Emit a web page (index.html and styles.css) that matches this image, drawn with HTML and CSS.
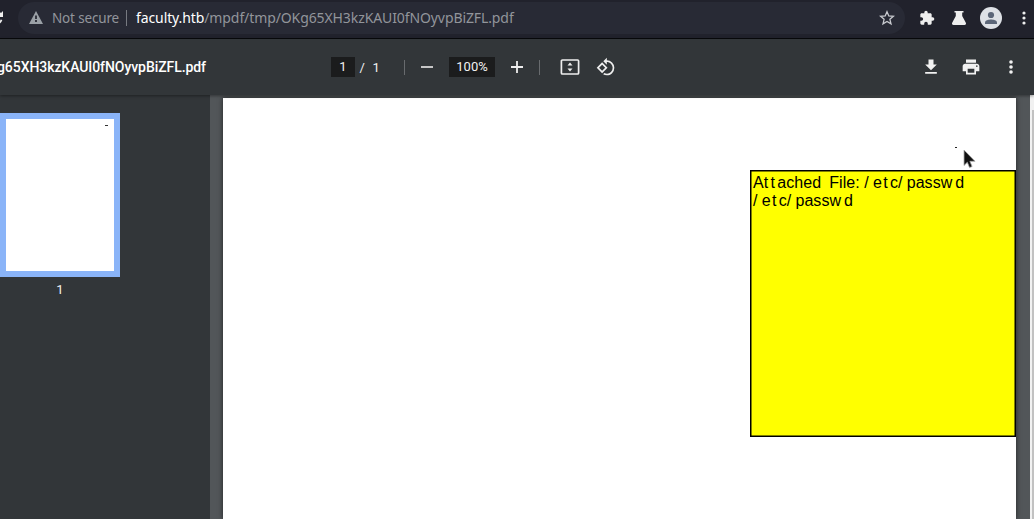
FILE: index.html
```
<!DOCTYPE html>
<html lang="en">
<head>
<meta charset="utf-8">
<title>PDF viewer</title>
<link rel="stylesheet" href="styles.css">
</head>
<body>
<div class="window">
  <header class="browser-bar">
    <svg class="reload" width="18" height="36" viewBox="0 0 18 36"><path d="M-5 12.2A6.3 6.3 0 0 1 1.2 14.6M-5 24A6.3 6.3 0 0 0 1.5 19.7" fill="none" stroke="#eee" stroke-width="1.8"/><path d="M3 11v6h-6z" fill="#eee"/></svg>
    <div class="address">
      <svg class="warning" width="14" height="13" viewBox="0 0 14 13"><path d="M7 0l7 13H0z" fill="#9aa0a6"/><path d="M6.1 4.5h1.800v3.400H6.100zm0 4.600h1.800v1.800H6.100z" fill="#282a35"/></svg>
      <span class="security">Not secure</span>
      <span class="address-divider"></span>
      <span class="url"><b>faculty.htb</b>/mpdf/tmp/OKg65XH3kzKAUI0fNOyvpBiZFL.pdf</span>
      <svg class="star" width="16" height="16" viewBox="0 0 16 16"><path d="M8 1.700l1.800 4.200 4.600.4-3.500 3 1.100 4.500L8 11.400l-4 2.400 1.100-4.500-3.500-3 4.600-.4z" fill="none" stroke="#c9cbd0" stroke-width="1.300"/></svg>
    </div>
    <svg class="puzzle" width="16" height="16" viewBox="0 0 24 24"><path d="M20.500 11H19V7c0-1.100-.9-2-2-2h-4V3.500a2.500 2.500 0 0 0-5 0V5H4c-1.100 0-2 .9-2 2v3.800h1.500a2.700 2.700 0 0 1 0 5.400H2V20c0 1.100.9 2 2 2h3.800v-1.500a2.700 2.700 0 0 1 5.400 0V22H17c1.100 0 2-.9 2-2v-4h1.500a2.500 2.500 0 0 0 0-5z" fill="#eee"/></svg>
    <svg class="flask" width="16" height="16" viewBox="0 0 16 16"><path d="M3.500 1h9v1.500h-1.300V6l3.500 6.500c.8 1.500 0 2.500-1.200 2.500h-11c-1.200 0-2-1-1.200-2.500L4.800 6V2.500H3.500z" fill="#eee"/></svg>
    <svg class="profile" width="22" height="22" viewBox="0 0 22 22"><circle cx="11" cy="11" r="11" fill="#dee1e6"/><circle cx="11" cy="8" r="3.100" fill="#5c6678"/><path d="M5 17v-1.500c0-2.200 3.700-3 6-3s6 .8 6 3V17z" fill="#5c6678"/></svg>
    <svg class="browser-menu" width="4" height="14" viewBox="0 0 4 14" fill="#eee"><circle cx="2" cy="2" r="1.600"/><circle cx="2" cy="7" r="1.600"/><circle cx="2" cy="12" r="1.600"/></svg>
  </header>
  <div class="toolbar">
    <div class="file-name">g65XH3kzKAUI0fNOyvpBiZFL.pdf</div>
    <span class="field page-field">1</span>
    <span class="slash">/</span>
    <span class="total">1</span>
    <span class="divider"></span>
    <svg class="minus" width="12" height="12" viewBox="0 0 12 12"><path d="M0 5h12v2H0z" fill="#c6c6c6"/></svg>
    <span class="field zoom-field">100%</span>
    <svg class="plus" width="12" height="12" viewBox="0 0 12 12"><path d="M0 5.100h5.100V0h1.800v5.100H12v1.800H6.900V12H5.100V6.900H0z" fill="#eee"/></svg>
    <span class="divider second-divider"></span>
    <svg class="fit" width="20" height="16" viewBox="0 0 20 16"><rect x="1.400" y="1" width="17.200" height="14" rx="1" fill="none" stroke="#eee" stroke-width="1.700"/><path d="M7.500 6.500L10 3.500l2.500 3zM7.500 9.500l2.500 3 2.500-3z" fill="#eee"/></svg>
    <svg class="rotate" width="20" height="20" viewBox="0 0 24 24"><path d="M7.340 6.410L.86 12.900l6.490 6.480 6.490-6.480-6.500-6.490zM3.690 12.900l3.660-3.660L11 12.900l-3.660 3.660-3.650-3.660zm15.670-6.260A8.950 8.950 0 0 0 13 4V.76L8.760 5 13 9.240V6c1.790 0 3.580.68 4.950 2.050a7.007 7.007 0 0 1 0 9.900 6.973 6.973 0 0 1-7.920 1.360l-1.490 1.490A8.990 8.990 0 0 0 13 22c2.300 0 4.610-.88 6.360-2.640a8.980 8.980 0 0 0 0-12.720z" fill="#eee"/></svg>
    <svg class="download" width="20" height="20" viewBox="0 0 24 24"><path d="M19 9h-4V3H9v6H5l7 7 7-7zM5 18v2h14v-2H5z" fill="#f1f1f1"/></svg>
    <svg class="print" width="20" height="20" viewBox="0 0 24 24"><path d="M19 8H5c-1.660 0-3 1.340-3 3v6h4v4h12v-4h4v-6c0-1.660-1.340-3-3-3zm-3 11H8v-5h8v5zm3-7c-.55 0-1-.45-1-1s.45-1 1-1 1 .45 1 1-.45 1-1 1zm-1-9H6v4h12V3z" fill="#f1f1f1"/></svg>
    <svg class="viewer-menu" width="4" height="14" viewBox="0 0 4 14" fill="#f1f1f1"><circle cx="2" cy="2" r="1.800"/><circle cx="2" cy="7" r="1.800"/><circle cx="2" cy="12" r="1.800"/></svg>
  </div>
  <main class="viewer">
    <aside class="sidebar">
      <div class="thumbnail"><span class="thumbnail-mark"></span></div>
      <div class="thumbnail-label">1</div>
    </aside>
    <section class="canvas">
      <div class="page">
        <span class="attachment-mark"></span>
        <div class="note">
          <div class="note-line">A<i class="t">t</i><i class="t">t</i>ached <i class="word">File:</i> <i class="gap">/</i><i class="e">e</i><i class="t">t</i>c<i class="gap">/</i>pass<i class="w">w</i>d</div>
          <div class="note-line"><i class="gap">/</i><i class="e">e</i><i class="t">t</i>c<i class="gap">/</i>pass<i class="w">w</i>d</div>
        </div>
        <svg class="cursor" width="14" height="20" viewBox="0 0 14 20"><path d="M1 1v15.500l3.300-3.200 2.200 5.300 2.600-1.100-2.200-5.200H12z" fill="#111" stroke="#aaa" stroke-width=".8"/></svg>
      </div>
      <div class="scrollbar"><div class="thumb"></div></div>
    </section>
  </main>
</div>
</body>
</html>
```
FILE: styles.css
```
* { box-sizing: border-box; }
body { margin: 0; overflow: hidden; }
svg { display: block; flex: none; }
.window { width: 1034px; height: 519px; display: flex; flex-direction: column; overflow: hidden; background: #323639; }
.browser-bar { height: 39px; flex: none; display: flex; align-items: center; padding-bottom: 3px; background: #21222c; border-bottom: 1px solid #08090b; font: 14px "Noto Sans", sans-serif; }
.address { width: 887px; height: 32px; border-radius: 16px; background: #282a35; display: flex; align-items: center; color: #92959b; white-space: nowrap; }
.warning { margin-left: 11px; }
.security { margin-left: 9px; width: 67px; font-size: 13.500px; letter-spacing: -.16px; }
.address-divider { width: 1px; height: 16px; background: #777a81; margin-left: 7px; }
.url { margin-left: 9px; letter-spacing: -.1px; }
.url b { font-weight: 400; color: #fff; }
.star { margin-left: auto; margin-right: 10px; }
.puzzle { margin-left: 14px; }
.flask { margin-left: 16px; }
.profile { margin-left: 13px; }
.browser-menu { margin-left: 19.500px; }
.toolbar { height: 56px; flex: none; display: flex; align-items: center; background: #323639; color: #f1f1f1; font: 13px Roboto, sans-serif; position: relative; z-index: 1; box-shadow: 0 1px 3px #0006; }
.file-name { width: 331px; flex: none; text-indent: -3px; font-size: 14px; font-weight: 500; letter-spacing: -.07px; color: #fff; white-space: nowrap; }
.field { height: 20px; line-height: 20px; background: #1b1c1d; text-align: center; }
.page-field { width: 24px; }
.slash { width: 13px; margin-left: 4.500px; }
.total { width: 8px; }
.divider { width: 1px; height: 15px; background: #686b6e; margin-left: 23.500px; }
.minus { margin-left: 16px; }
.zoom-field { width: 46px; margin-left: 16px; }
.plus { margin-left: 16px; }
.second-divider { margin-left: 16px; }
.fit { margin-left: 20px; }
.rotate { margin-left: 16px; }
.download { margin-left: auto; }
.print { margin-left: 20px; }
.viewer-menu { margin: 0 21px 0 28px; }
.viewer { flex: 1; display: flex; min-height: 0; }
.sidebar { width: 210px; padding-top: 18px; background: #323639; color: #f1f1f1; font: 13px Roboto, sans-serif; }
.thumbnail { width: 120px; height: 164px; border: 6px solid #8ab4f8; background: #fff; position: relative; }
.thumbnail-mark { position: absolute; width: 3px; height: 1px; top: 6px; right: 6px; background: #333; }
.thumbnail-label { width: 120px; text-align: center; margin-top: 5px; }
.canvas { flex: 1; display: flex; justify-content: space-between; background: #525659; padding: 3px 0 0 13px; }
.page { width: 793px; background: #fff; box-shadow: 0 0 5px #0009; position: relative; }
.attachment-mark { position: absolute; left: 732px; top: 49px; width: 2px; height: 1px; background: #222; }
.note { position: absolute; left: 527px; top: 72px; width: 266px; height: 267px; border: 1px solid #000; background: #ff0; box-shadow: inset 0 0 0 .5px #000; padding: 3px 0 0 2px; font: 16px/18px "Liberation Sans", Arial, sans-serif; letter-spacing: .06px; color: #000; }
.note-line { white-space: nowrap; }
.note i { font-style: normal; display: inline-block; }
.note .t { width: 6.800px; }
.note .word { margin-left: 3.500px; }
.note .gap { width: 8.700px; }
.note .e { width: 10.200px; }
.note .w { width: 14.500px; }
.cursor { position: absolute; left: 740px; top: 51px; }
.scrollbar { width: 4px; margin-top: -3px; background: #f1f1f1; padding: 15px 0 0 2px; }
.thumb { height: 409px; background: #c1c1c1; }
```
